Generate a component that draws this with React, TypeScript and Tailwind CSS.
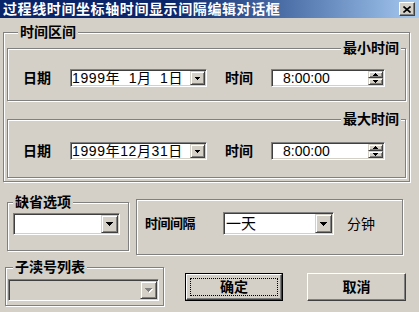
import React from "react"

const sunken =
  "border border-t-[#808080] border-l-[#808080] border-r-white border-b-white p-px shadow-[inset_1px_1px_0_#404040,inset_-1px_-1px_0_#d4d0c8]"
const raised =
  "border border-t-white border-l-white border-r-[#404040] border-b-[#404040] shadow-[inset_-1px_-1px_0_#808080] bg-[#d4d0c8]"
const arrowBtn =
  "border border-t-[#d4d0c8] border-l-[#d4d0c8] border-r-[#404040] border-b-[#404040] shadow-[inset_1px_1px_0_#fff,inset_-1px_-1px_0_#808080] bg-[#d4d0c8]"
const etched = "border border-[#808080] shadow-[inset_1px_1px_0_#fff,1px_1px_0_#fff]"
const bold = "font-bold text-[14px] leading-[16px]"

function Down({ color = "#000", size = 7 }: { color?: string; size?: number }) {
  const rows = Math.ceil(size / 2)
  return (
    <svg width={size} height={rows} viewBox={`0 0 ${size} ${rows}`} shapeRendering="crispEdges">
      {Array.from({ length: rows }).map((_, r) => (
        <rect key={r} x={r} y={r} width={size - r * 2} height={1} fill={color} />
      ))}
    </svg>
  )
}

function Up() {
  return (
    <svg width={5} height={3} viewBox="0 0 5 3" shapeRendering="crispEdges">
      <rect x={2} y={0} width={1} height={1} fill="#000" />
      <rect x={1} y={1} width={3} height={1} fill="#000" />
      <rect x={0} y={2} width={5} height={1} fill="#000" />
    </svg>
  )
}

function Combo({
  text,
  className,
  textClass = "",
  disabled = false,
  small = false,
}: {
  text?: string
  className: string
  textClass?: string
  disabled?: boolean
  small?: boolean
}) {
  return (
    <div className={`flex ${sunken} ${disabled ? "bg-[#d4d0c8]" : "bg-white"} ${className}`}>
      <div className={`flex-1 overflow-hidden whitespace-pre ${textClass}`}>{text}</div>
      <div className={`flex items-center justify-center ${small ? "w-[15px]" : "w-[17px]"} ${arrowBtn}`}>
        {disabled ? (
          <div className="relative">
            <div className="absolute left-px top-px">
              <Down color="#fff" size={small ? 5 : 7} />
            </div>
            <div className="relative">
              <Down color="#808080" size={small ? 5 : 7} />
            </div>
          </div>
        ) : (
          <Down size={small ? 5 : 7} />
        )}
      </div>
    </div>
  )
}

function Spin({ text }: { text: string }) {
  return (
    <div className={`flex h-[18px] w-[114px] bg-white ${sunken}`}>
      <div className="flex-1 pl-[10px] text-[14px] leading-[14px]">{text}</div>
      <div className="flex w-[15px] flex-col">
        <div className={`flex h-[7px] items-center justify-center ${arrowBtn}`}>
          <Up />
        </div>
        <div className={`flex h-[7px] items-center justify-center ${arrowBtn}`}>
          <Down size={5} />
        </div>
      </div>
    </div>
  )
}

function Group({
  title,
  right = false,
  legendClass = "",
  className,
  children,
}: {
  title: string
  right?: boolean
  legendClass?: string
  className: string
  children: React.ReactNode
}) {
  return (
    <fieldset className={`${etched} ${className}`}>
      <legend className={`${bold} bg-[#d4d0c8] px-[2px] ${right ? "ml-auto mr-[4px]" : ""} ${legendClass}`}>
        {title}
      </legend>
      {children}
    </fieldset>
  )
}

function DateRow({ date, pt, pb }: { date: string; pt: string; pb: string }) {
  return (
    <div className={`flex items-center pl-[15px] ${pt} ${pb}`}>
      <span className={bold}>日期</span>
      <Combo
        text={date}
        small
        className="ml-[19px] h-[18px] w-[137px]"
        textClass="text-[14px] leading-[14px] tracking-[0.6px] [word-spacing:4px]"
      />
      <span className={`${bold} ml-[18px]`}>时间</span>
      <div className="ml-[18px]">
        <Spin text="8:00:00" />
      </div>
    </div>
  )
}

export default function App() {
  return (
    <div className="h-[312px] w-[419px] overflow-hidden bg-[#d4d0c8] font-['Liberation_Sans','Noto_Sans_CJK_SC',sans-serif] text-black">
      <div className="flex h-[18px] items-center justify-between bg-linear-to-r from-[#0a246a] from-40% to-[#a6caf0] pl-[3px] pr-[4px]">
        <span className="text-[14px] font-bold leading-[18px] tracking-[0.6px] text-white">
          过程线时间坐标轴时间显示间隔编辑对话框
        </span>
        <div className={`flex h-[14px] w-[16px] items-center justify-center ${raised}`}>
          <svg width="8" height="7" viewBox="0 0 8 7">
            <path d="M0.5 0.5L7.5 6.5M7.5 0.5L0.5 6.5" stroke="#000" strokeWidth="1.6" />
          </svg>
        </div>
      </div>

      <Group title="时间区间" className="ml-[3px] mt-[6px] w-[407px]" legendClass="ml-[14px]">
        <div className="pb-[3px] pl-[3px] pr-[3px]">
          <Group title="最小时间" right className="w-[399px]">
            <DateRow date="1999年 1月 1日" pt="pt-[13px]" pb="pb-[13px]" />
          </Group>
          <Group title="最大时间" right className="mt-[10px] w-[399px]">
            <DateRow date="1999年12月31日" pt="pt-[15px]" pb="pb-[17px]" />
          </Group>
        </div>
      </Group>

      <div className="mt-[12px] flex items-start">
        <Group title="缺省选项" className="ml-[7px] w-[122px]" legendClass="ml-[5px]">
          <div className="pb-[15px] pl-[5px] pr-[6px] pt-[3px]">
            <Combo className="h-[22px] w-[107px]" />
          </div>
        </Group>
        <div className={`ml-[7px] mt-[5px] h-[56px] w-[267px] ${etched}`}>
          <div className="flex h-[23px] items-center pl-[8px] mt-[12px]">
            <span className="w-[78px] text-[13px] font-bold leading-[16px] tracking-[-0.5px]">时间间隔</span>
            <Combo
              text="一天"
              className="h-[23px] w-[111px]"
              textClass="pl-px text-[15px] leading-[19px]"
            />
            <span className="ml-[13px] text-[14px] leading-[16px]">分钟</span>
          </div>
        </div>
      </div>

      <div className="mt-[4px] flex items-start">
        <Group title="子渎号列表" className="ml-[5px] w-[159px]" legendClass="ml-[7px]">
          <div className="pb-[4px] pl-[2px] pr-[4px] pt-[4px]">
            <Combo disabled className="h-[22px] w-[151px]" />
          </div>
        </Group>
        <div className="ml-[21px] mt-[14px] h-[28px] w-[98px] border border-black">
          <div className={`flex h-full items-center justify-center p-[3px] ${raised}`}>
            <div className={`flex h-full w-full items-center justify-center border border-dotted border-black ${bold}`}>
              确定
            </div>
          </div>
        </div>
        <div className={`ml-[24px] mt-[14px] flex h-[28px] w-[99px] items-center justify-center ${raised} ${bold}`}>
          取消
        </div>
      </div>
    </div>
  )
}
